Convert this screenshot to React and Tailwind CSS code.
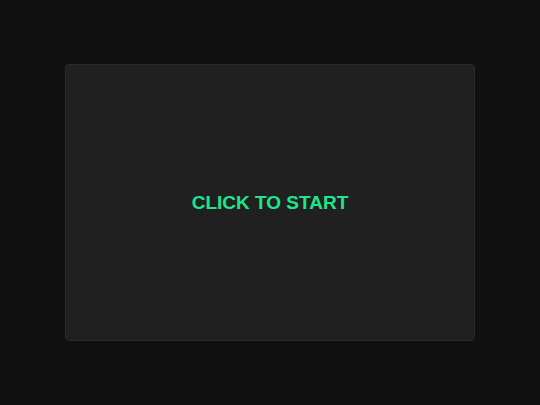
export default function App() {
  return (
    <div className="w-[540px] h-[405px] bg-[#111111] flex items-center justify-center font-['Liberation_Sans',Arial,sans-serif]">
      <button className="w-[410px] h-[277px] bg-[#202020] border border-[#2a2a2a] rounded-[4px] flex items-center justify-center cursor-pointer">
        <span className="text-[19px] font-bold text-[#1ee68a] leading-none -mt-[1px]">CLICK TO START</span>
      </button>
    </div>
  );
}
